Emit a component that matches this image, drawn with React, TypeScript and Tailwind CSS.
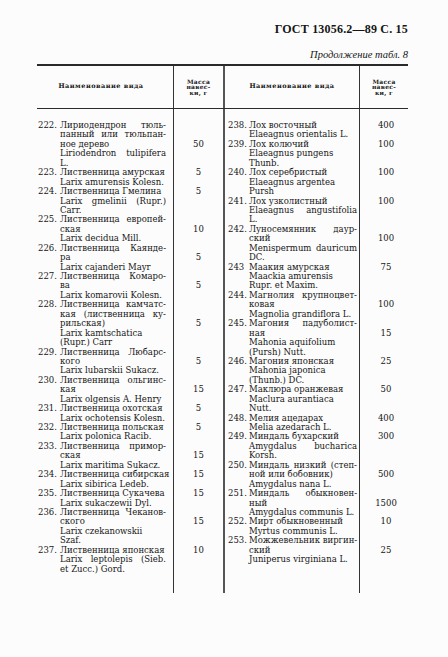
type Entry = { n: string; ru: string[]; lat: string[]; m: string };

// lat lines starting with ^ are justified to the column edge
const left: Entry[] = [
  { n: '222.', ru: ['Лириодендрон тюль-', 'панный или тюльпан-', 'ное дерево'], lat: ['^Liriodendron tulipifera', 'L.'], m: '50' },
  { n: '223.', ru: ['Лиственница амурская'], lat: ['Larix amurensis Kolesn.'], m: '5' },
  { n: '224.', ru: ['Лиственница Гмелина'], lat: ['^Larix gmelinii (Rupr.)', 'Carr.'], m: '5' },
  { n: '225.', ru: ['Лиственница европей-', 'ская'], lat: ['Larix decidua Mill.'], m: '10' },
  { n: '226.', ru: ['Лиственница Каянде-', 'ра'], lat: ['Larix cajanderi Mayr'], m: '5' },
  { n: '227.', ru: ['Лиственница Комаро-', 'ва'], lat: ['Larix komarovii Kolesn.'], m: '5' },
  { n: '228.', ru: ['Лиственница камчатс-', 'кая (лиственница ку-', 'рильская)'], lat: ['Larix kamtschatica', '(Rupr.) Carr'], m: '5' },
  { n: '229.', ru: ['Лиственница Любарс-', 'кого'], lat: ['Larix lubarskii Sukacz.'], m: '5' },
  { n: '230.', ru: ['Лиственница ольгинс-', 'кая'], lat: ['Larix olgensis A. Henry'], m: '15' },
  { n: '231.', ru: ['Лиственница охотская'], lat: ['Larix ochotensis Kolesn.'], m: '5' },
  { n: '232.', ru: ['Лиственница польская'], lat: ['Larix polonica Racib.'], m: '5' },
  { n: '233.', ru: ['Лиственница примор-', 'ская'], lat: ['Larix maritima Sukacz.'], m: '15' },
  { n: '234.', ru: ['Лиственница сибирская'], lat: ['Larix sibirica Ledeb.'], m: '15' },
  { n: '235.', ru: ['Лиственница Сукачева'], lat: ['Larix sukaczewii Dyl.'], m: '15' },
  { n: '236.', ru: ['Лиственница Чеканов-', 'ского'], lat: ['Larix czekanowskii', 'Szaf.'], m: '15' },
  { n: '237.', ru: ['Лиственница японская'], lat: ['^Larix leptolepis (Sieb.', 'et Zucc.) Gord.'], m: '10' },
]

const right: Entry[] = [
  { n: '238.', ru: ['Лох восточный'], lat: ['Elaeagnus orientalis L.'], m: '400' },
  { n: '239.', ru: ['Лох колючий'], lat: ['Elaeagnus pungens', 'Thunb.'], m: '100' },
  { n: '240.', ru: ['Лох серебристый'], lat: ['Elaeagnus argentea', 'Pursh'], m: '100' },
  { n: '241.', ru: ['Лох узколистный'], lat: ['^Elaeagnus angustifolia', 'L.'], m: '100' },
  { n: '242.', ru: ['Луносемянник даур-', 'ский'], lat: ['^Menispermum dauricum', 'DC.'], m: '100' },
  { n: '243', ru: ['Маакия амурская'], lat: ['Maackia amurensis', 'Rupr. et Maxim.'], m: '75' },
  { n: '244.', ru: ['Магнолия крупноцвет-', 'ковая'], lat: ['Magnolia grandiflora L.'], m: '100' },
  { n: '245.', ru: ['Магония падуболист-', 'ная'], lat: ['Mahonia aquifolium', '(Pursh) Nutt.'], m: '15' },
  { n: '246.', ru: ['Магония японская'], lat: ['Mahonia japonica', '(Thunb.) DC.'], m: '25' },
  { n: '247.', ru: ['Маклюра оранжевая'], lat: ['Maclura aurantiaca', 'Nutt.'], m: '50' },
  { n: '248.', ru: ['Мелия ацедарах'], lat: ['Melia azedarach L.'], m: '400' },
  { n: '249.', ru: ['Миндаль бухарский'], lat: ['^Amygdalus bucharica', 'Korsh.'], m: '300' },
  { n: '250.', ru: ['Миндаль низкий (степ-', 'ной или бобовник)'], lat: ['Amygdalus nana L.'], m: '500' },
  { n: '251.', ru: ['Миндаль обыкновен-', 'ный'], lat: ['Amygdalus communis L.'], m: '1500' },
  { n: '252.', ru: ['Мирт обыкновенный'], lat: ['Myrtus communis L.'], m: '10' },
  { n: '253.', ru: ['Можжевельник виргин-', 'ский'], lat: ['Juniperus virginiana L.'], m: '25' },
]

const Line = ({ text, justify }: { text: string; justify: boolean }) => (
  <div className={`h-[9.45px] whitespace-nowrap ${justify ? 'text-justify [text-align-last:justify]' : ''}`}>
    {text}
  </div>
)

const Names = ({ items, numW }: { items: Entry[]; numW: string }) => (
  <div className="flex flex-col">
    {items.map((e) => (
      <div key={e.n} className="flex">
        <div className={`${numW} shrink-0`}>{e.n}</div>
        <div className="flex-1 min-w-0">
          {e.ru.map((t) => (
            <Line key={t} text={t} justify={t.endsWith('-')} />
          ))}
          {e.lat.map((t) => (
            <Line key={t} text={t.replace('^', '')} justify={t.startsWith('^')} />
          ))}
        </div>
      </div>
    ))}
  </div>
)

const Masses = ({ items }: { items: Entry[] }) => (
  <div className="flex flex-col">
    {items.map((e) => {
      const total = e.ru.length + e.lat.length
      return (
        <div key={e.n}>
          {Array.from({ length: total }).map((_, i) => (
            <div key={i} className="h-[9.45px] text-center">
              {i === e.ru.length - 1 ? e.m : ''}
            </div>
          ))}
        </div>
      )
    })}
  </div>
)

const MassHead = () => (
  <div className="flex flex-col items-center text-[6px] leading-[5.5px] tracking-[0.3px] font-bold text-center">
    <span>Масса</span>
    <span>навес-</span>
    <span>ки, г</span>
  </div>
)

export default function App() {
  return (
    <div className="w-[448px] h-[657px] bg-[#fcfcfc] text-[#161616] pl-[37px] pr-[40px] pt-[23px] [font-family:'DejaVu_Serif',serif]">
      <div className="text-right text-[12px] leading-[12px] font-bold [font-family:'Liberation_Serif',serif] tracking-[0.2px]">
        ГОСТ 13056.2—89 С. 15
      </div>
      <div className="mt-[14px] text-right text-[10.5px] leading-[12px] italic [font-family:'Liberation_Serif',serif]">
        Продолжение табл. 8
      </div>

      <div className="mt-[3px] border-t-2 border-[#2a2a2a]">
        <div className="grid grid-cols-[137px_51px_135px_48px] h-[43px] border-b-[1.5px] border-[#2a2a2a]">
          <div className="border-r border-[#333] flex items-center justify-center pr-[8px] text-[6.5px] font-bold tracking-[0.5px]">
            Наименование вида
          </div>
          <div className="border-r-2 border-[#555] flex items-center justify-center">
            <MassHead />
          </div>
          <div className="border-r border-[#333] flex items-center justify-center text-[6.5px] font-bold tracking-[0.5px]">
            Наименование вида
          </div>
          <div className="flex items-center justify-center">
            <MassHead />
          </div>
        </div>

        <div className="grid grid-cols-[137px_51px_135px_48px] text-[8.5px] leading-[9.45px]">
          <div className="border-r border-[#333] pl-[1px] pr-[7px] pt-[12px] pb-[19px]">
            <Names items={left} numW="w-[22px]" />
          </div>
          <div className="border-r-2 border-[#555] pt-[12px] pb-[19px]">
            <Masses items={left} />
          </div>
          <div className="border-r border-[#333] pl-[3px] pr-[2px] pt-[12px] pb-[19px]">
            <Names items={right} numW="w-[21px]" />
          </div>
          <div className="pl-[4px] pt-[12px] pb-[19px]">
            <Masses items={right} />
          </div>
        </div>
      </div>
    </div>
  )
}
